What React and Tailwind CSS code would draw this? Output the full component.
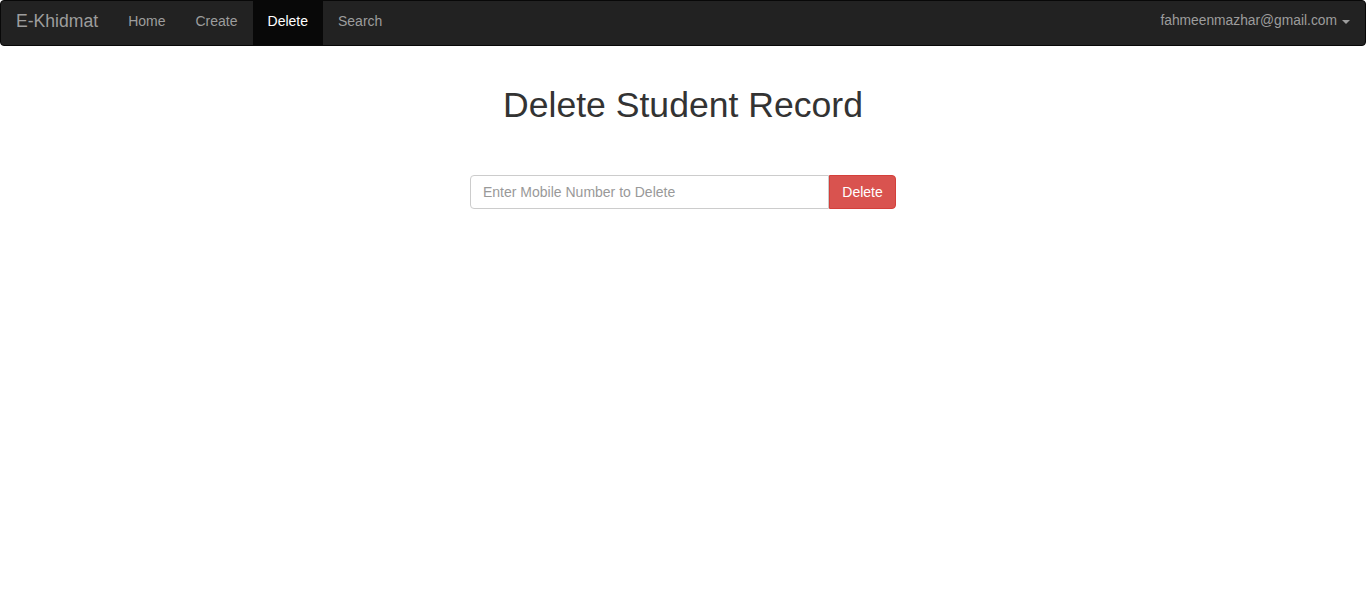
import React from "react";

const NavLink = ({ label, active }) => (
  <a
    href="#"
    className={
      active
        ? "flex h-full items-center px-[15px] pb-[4px] bg-[#080808] text-white"
        : "flex h-full items-center px-[15px] pb-[4px] text-[#9d9d9d] hover:text-white"
    }
  >
    {label}
  </a>
);

const App = () => {
  return (
    <div className="min-h-screen bg-white font-['Liberation_Sans',Arial,sans-serif] text-[14px] text-[#333]">
      {/* Navbar */}
      <nav className="flex h-[46px] items-stretch justify-between rounded border border-[#080808] bg-[#222] text-[14px]">
        <div className="flex items-stretch">
          <a
            href="#"
            className="flex items-center pl-[15px] pr-[15px] pb-[4px] text-[17.6px] text-[#9d9d9d]"
          >
            E-Khidmat
          </a>
          <NavLink label="Home" />
          <NavLink label="Create" />
          <NavLink label="Delete" active />
          <NavLink label="Search" />
        </div>
        <a
          href="#"
          className="flex items-center gap-[5px] pr-[15px] pb-[4px] text-[13.8px] text-[#9d9d9d]"
        >
          fahmeenmazhar@gmail.com
          <span className="mt-[2px] h-0 w-0 border-x-4 border-t-4 border-x-transparent border-t-[#9d9d9d]" />
        </a>
      </nav>

      {/* Content */}
      <div className="flex flex-col items-center">
        <h1 className="mt-[39px] text-[35.6px] leading-[40px] text-[#333]">
          Delete Student Record
        </h1>
        <div className="mt-[50px] flex w-[426px]">
          <input
            type="text"
            placeholder="Enter Mobile Number to Delete"
            className="h-[34px] flex-1 rounded-l border border-[#ccc] px-3 text-[14px] text-[#555] placeholder:text-[#999] outline-none"
          />
          <button className="h-[34px] w-[67px] rounded-r border border-[#d43f3a] bg-[#d9534f] text-[14px] text-white">
            Delete
          </button>
        </div>
      </div>
    </div>
  );
};

export default App;
